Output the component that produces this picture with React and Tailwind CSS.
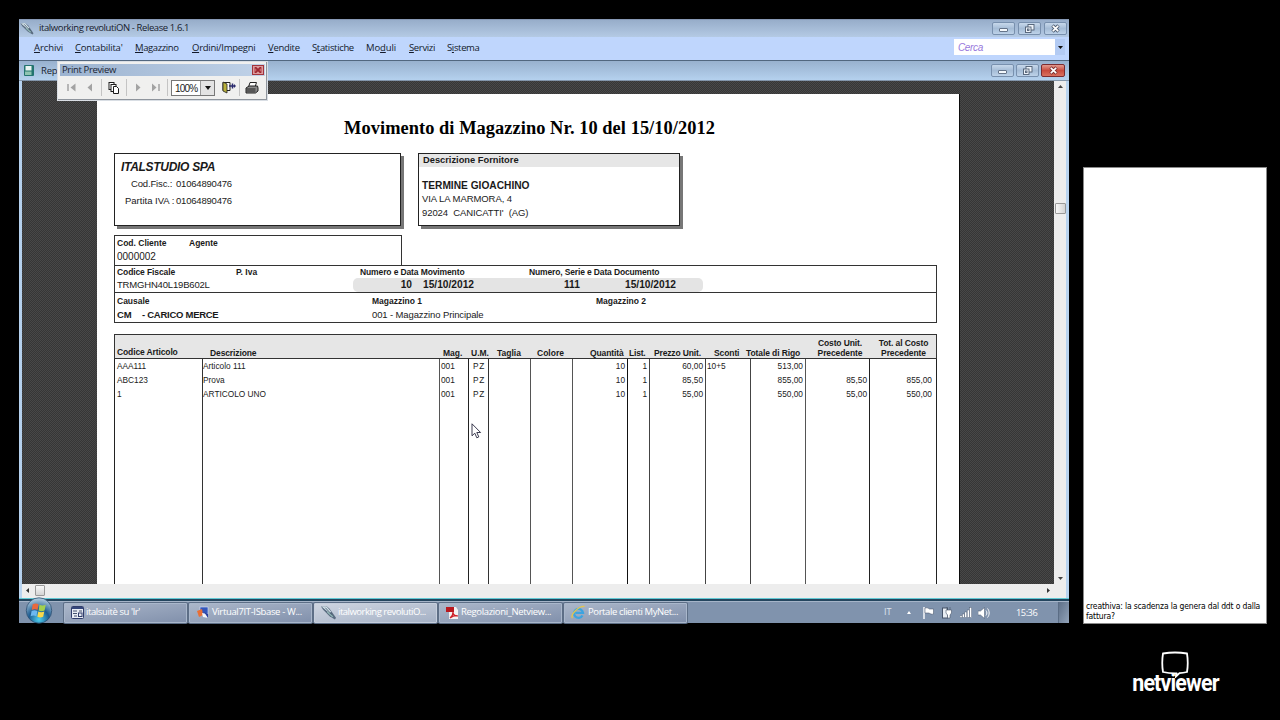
import React from 'react';

const menuItems = [
  { pre: '', key: 'A', post: 'rchivi', cell: 'w-[41px]', text: 'tracking-[-0.1px]' },
  { pre: '', key: 'C', post: "ontabilita'", cell: 'w-[60px]', text: 'tracking-[-0.2px]' },
  { pre: '', key: 'M', post: 'agazzino', cell: 'w-[57px]', text: 'tracking-[-0.4px]' },
  { pre: '', key: 'O', post: 'rdini/Impegni', cell: 'w-[76px]', text: 'tracking-[-0.27px]' },
  { pre: '', key: 'V', post: 'endite', cell: 'w-[44px]', text: 'tracking-[-0.3px]' },
  { pre: 'S', key: 't', post: 'atistiche', cell: 'w-[54px]', text: 'tracking-[-0.35px]' },
  { pre: 'Mo', key: 'd', post: 'uli', cell: 'w-[43px]', text: 'tracking-[-0.1px]' },
  { pre: '', key: 'S', post: 'ervizi', cell: 'w-[38px]', text: 'tracking-[-0.35px]' },
  { pre: 'S', key: 'i', post: 'stema', cell: 'w-[40px]', text: 'tracking-[-0.35px]' },
];

const columns = [
  { width: 'w-[88px]', cell: 'pl-[2px]', border: 'border-[#222]', rows: ['AAA111', 'ABC123', '1'] },
  { width: 'w-[237px]', cell: '', border: 'border-[#333]', rows: ['Articolo 111', 'Prova', 'ARTICOLO UNO'] },
  { width: 'w-[29px]', cell: 'pl-px', border: 'border-[#555]', rows: ['001', '001', '001'] },
  { width: 'w-[20px]', cell: 'pl-[4px] tracking-[0.6px]', border: 'border-[#222]', rows: ['PZ', 'PZ', 'PZ'] },
  { width: 'w-[42px]', cell: '', border: 'border-[#333]', rows: [] },
  { width: 'w-[42px]', cell: '', border: 'border-[#555]', rows: [] },
  { width: 'w-[55px]', cell: 'pr-[2px] text-right', border: 'border-[#555]', rows: ['10', '10', '10'] },
  { width: 'w-[22px]', cell: 'pr-[2px] text-right', border: 'border-[#111]', rows: ['1', '1', '1'] },
  { width: 'w-[56px]', cell: 'pr-[2px] text-right', border: 'border-[#444]', rows: ['60,00', '85,50', '55,00'] },
  { width: 'w-[45px]', cell: 'pl-px', border: 'border-[#444]', rows: ['10+5'] },
  { width: 'w-[55px]', cell: 'pr-[2px] text-right', border: 'border-[#444]', rows: ['513,00', '855,00', '550,00'] },
  { width: 'w-[64px]', cell: 'pr-[2px] text-right', border: 'border-[#555]', rows: ['', '85,50', '55,00'] },
  { width: 'w-[68px] border-r', cell: 'pr-[4px] text-right', border: 'border-[#222]', rows: ['', '855,00', '550,00'] },
];

const tasks = [
  { label: "italsuitè su 'lr'", icon: 'form', text: 'tracking-[-0.4px]' },
  { label: 'Virtual7IT-ISbase - W...', icon: 'virtual', text: 'tracking-[-0.35px]' },
  { label: 'italworking revolutiO...', icon: 'pen', active: true, text: 'tracking-[-0.5px]' },
  { label: 'Regolazioni_Netview...', icon: 'pdf', text: 'tracking-[-0.35px]' },
  { label: 'Portale clienti MyNet...', icon: 'ie', text: 'tracking-[-0.4px]' },
];

function PenIcon({ className }) {
  return (
    <svg className={className} viewBox="0 0 14 14">
      <path d="M0 1.500L5 1l3 2.500 6 8.500-1 1.500-5-3-6-6z" fill="#5a6c80" />
      <path d="M0.500 1.500L5 1.200l4.500 5-1.500 1.500z" fill="#d3e2ea" />
      <path d="M4 2.500l7 7.500" stroke="#3d5164" strokeWidth="0.800" />
      <path d="M6 6.500l5 4.500" stroke="#8fb5b4" strokeWidth="1.300" />
    </svg>
  );
}

function TaskIcon({ name }) {
  if (name === 'pen') return <PenIcon className="h-[15px] w-[15px]" />;
  if (name === 'form') {
    return (
      <svg className="h-[13px] w-[13px]" viewBox="0 0 13 13">
        <rect x="0.5" y="0.5" width="12" height="12" rx="1" fill="#e8edf5" stroke="#303d6b" />
        <rect x="1" y="1" width="11" height="2" fill="#35477c" />
        <path d="M2 5h4M2 7.500h4M8 5h3M3 10h3" stroke="#46536f" />
        <rect x="7.500" y="7" width="3.500" height="3.500" fill="none" stroke="#303d6b" />
      </svg>
    );
  }
  if (name === 'virtual') {
    return (
      <svg className="h-[14px] w-[14px]" viewBox="0 0 14 14">
        <rect x="4" y="1" width="8" height="7" fill="#3557ba" stroke="#dbe5fa" strokeWidth="0.600" />
        <path d="M1 5l5-2 1 6-4 2z" fill="#e96f36" />
        <path d="M6 7l4 1 2 4-5-1z" fill="#f4f5fa" />
        <path d="M8 6l4 2v4z" fill="#293e9c" />
      </svg>
    );
  }
  if (name === 'pdf') {
    return (
      <svg className="h-[14px] w-[13px]" viewBox="0 0 13 14">
        <path d="M3 1h7l2 3v9H3z" fill="#f4f1f1" />
        <rect x="0" y="1" width="8" height="5" fill="#b91920" />
        <path d="M4 12c3-2 3-5 3-6 0 3 2 4 5 4-3-1-5 0-8 2z" fill="none" stroke="#cf2028" strokeWidth="1.200" />
      </svg>
    );
  }
  return (
    <svg className="h-[15px] w-[15px]" viewBox="0 0 15 15">
      <path d="M11.500 10.500A4.500 4.500 0 1 1 12 7.800H4.500" fill="none" stroke="#3ca4e0" strokeWidth="2.300" />
      <path d="M1.500 13C-1 10 8 .5 13.500 1.500" fill="none" stroke="#e5c64c" strokeWidth="1.300" />
    </svg>
  );
}

function CaptionButton({ kind, red }) {
  return (
    <div
      className={
        red
          ? 'flex h-[13px] w-[24px] items-center justify-center rounded-[2px] border border-[#7c2c30] bg-gradient-to-b from-[#e29a90] via-[#c84a3d] to-[#d9705f]'
          : 'flex h-[13px] w-[23px] items-center justify-center rounded-[2px] border border-[#7890ae] bg-gradient-to-b from-[#c7d8eb] via-[#a5bcd6] to-[#bdd2e9]'
      }
    >
      <svg className="h-[9px] w-[11px]" viewBox="0 0 11 9">
        {kind === 'min' && <rect x="1.500" y="4.500" width="8" height="3" rx="0.500" fill="#f4f8fc" stroke="#58687e" strokeWidth="0.900" />}
        {kind === 'max' && (
          <g fill="#edf3fa" stroke="#4e5d72" strokeWidth="0.900">
            <rect x="4" y="0.500" width="6" height="5.500" />
            <rect x="1.500" y="3" width="5.500" height="5.500" />
            <rect x="3.500" y="5" width="1.500" height="1.500" />
          </g>
        )}
        {kind === 'close' && (
          <g>
            <path d="M2.500 1.500l6 6M8.500 1.500l-6 6" stroke={red ? '#7b2f30' : '#4e5d72'} strokeWidth="3.400" />
            <path d="M2.800 1.800l5.400 5.400M8.200 1.800l-5.400 5.400" stroke="#fff" strokeWidth="1.700" />
          </g>
        )}
      </svg>
    </div>
  );
}

function TitleBar() {
  return (
    <div className="flex h-[18px] items-center border-t border-[#8799b5] bg-gradient-to-b from-[#97adca] to-[#b4cae4] pr-[2px] pb-px pl-px">
      <PenIcon className="h-[13px] w-[14px]" />
      <span className="ml-[5px] flex-1 text-[9.5px] whitespace-nowrap tracking-[-0.4px] text-[#17202c]">
        italworking revolutiON - Release 1.6.1
      </span>
      <div className="flex gap-[3px]">
        <CaptionButton kind="min" />
        <CaptionButton kind="max" />
        <CaptionButton kind="close" />
      </div>
    </div>
  );
}

function MenuBar() {
  return (
    <div className="flex h-[24px] items-center border-b border-[#52677f] bg-[#bfd6fd] pr-[4px] pb-[3px] pl-[15px]">
      <div className="flex flex-1 pt-[2px] text-[9.5px] leading-[12px] whitespace-nowrap text-[#131a2b]">
        {menuItems.map((m) => (
          <div key={m.key + m.post} className={m.cell}>
            <span className={m.text}>
              {m.pre}
              <span className="underline underline-offset-1">{m.key}</span>
              {m.post}
            </span>
          </div>
        ))}
      </div>
      <div className="flex h-[16px] w-[111px] items-center bg-white pl-[4px] font-['Liberation_Sans']">
        <span className="flex-1 text-[10px] tracking-[-0.35px] text-[#9877dc] italic">Cerca</span>
        <div className="flex h-full w-[10px] items-center justify-center bg-[#b3cbf3]">
          <svg className="h-[3px] w-[5px]" viewBox="0 0 5 3">
            <path d="M0 0h5L2.500 3z" fill="#111" />
          </svg>
        </div>
      </div>
    </div>
  );
}

function MdiBar() {
  return (
    <div className="flex h-[20px] items-center border-b border-[#8295aa] bg-gradient-to-b from-[#98b1ce] to-[#b5d1ee] pr-[4px] pl-[5px]">
      <svg className="h-[11px] w-[10px]" viewBox="0 0 10 11">
        <rect width="10" height="11" rx="1" fill="#23746f" />
        <rect x="1.500" y="1" width="6" height="4.500" fill="#e9f5f0" />
        <rect x="1" y="6.500" width="6.500" height="3.500" fill="#8fc4b2" />
      </svg>
      <span className="ml-[7px] flex-1 pt-px text-[9.5px] tracking-[-0.2px] text-[#1a2431]">Rep</span>
      <div className="flex gap-[2px]">
        <CaptionButton kind="min" />
        <CaptionButton kind="max" />
        <CaptionButton kind="close" red />
      </div>
    </div>
  );
}

function PreviewToolbar() {
  return (
    <div className="absolute top-[42px] left-[38px] h-[40px] w-[211px] border border-[#d9dee4] bg-[#f0f0ef] shadow-[inset_-1px_-1px_0_#8f959d]">
      <div className="mx-[2px] mt-[2px] flex h-[12px] items-center justify-between bg-gradient-to-r from-[#9cb3d0] to-[#c0d2e8] pr-px pl-[2px]">
        <span className="text-[9.5px] leading-[12px] whitespace-nowrap tracking-[-0.35px] text-[#1b2433]">Print Preview</span>
        <div className="flex h-[10px] w-[12px] items-center justify-center border border-[#a2343c] bg-[#dc9a9c]">
          <svg className="h-[6px] w-[8px]" viewBox="0 0 8 6">
            <path d="M1 0l6 6M7 0L1 6" stroke="#9e2730" strokeWidth="1.800" />
            <path d="M1 1v4M7 1v4" stroke="#b03a42" />
          </svg>
        </div>
      </div>
      <div className="mt-px flex h-[21px] items-center">
        <svg className="ml-[9px] h-[9px] w-[10px]" viewBox="0 0 10 9">
          <path d="M1 1v7" stroke="#a3a3a3" strokeWidth="1.500" />
          <path d="M8.500 0.500v8L3.500 4.500z" fill="#a3a3a3" />
        </svg>
        <svg className="ml-[10px] h-[9px] w-[6px]" viewBox="0 0 6 9">
          <path d="M5 0.500v8L0.500 4.500z" fill="#a3a3a3" />
        </svg>
        <div className="ml-[8px] h-[17px] w-px bg-[#c4c4c4]" />
        <svg className="ml-[6px] h-[12px] w-[12px]" viewBox="0 0 12 12" fill="#fff" stroke="#1c1c1c">
          <rect x="1" y="0.500" width="5" height="7" />
          <rect x="3" y="2.500" width="5" height="7" />
          <path d="M5.500 4.500h3l2 2v5h-5z" />
        </svg>
        <div className="ml-[6px] h-[17px] w-px bg-[#c4c4c4]" />
        <svg className="ml-[8px] h-[9px] w-[6px]" viewBox="0 0 6 9">
          <path d="M1 0.500v8l4.500-4z" fill="#a3a3a3" />
        </svg>
        <svg className="ml-[10px] h-[9px] w-[10px]" viewBox="0 0 10 9">
          <path d="M8 1v7" stroke="#a3a3a3" strokeWidth="1.500" />
          <path d="M1 0.500v8l4.500-4z" fill="#a3a3a3" />
        </svg>
        <div className="ml-[6px] h-[17px] w-px bg-[#c4c4c4]" />
        <div className="ml-[3px] flex h-[16px] w-[44px] items-center border border-[#777] bg-white pl-[3px]">
          <span className="flex-1 pt-px font-['Liberation_Sans'] text-[10px] tracking-[-0.8px] text-[#1c1c1c]">100%</span>
          <div className="flex h-full w-[14px] items-center justify-center border-l border-[#999] bg-[#e3e3e3]">
            <svg className="h-[4px] w-[6px]" viewBox="0 0 6 4">
              <path d="M0 0h6L3 4z" fill="#111" />
            </svg>
          </div>
        </div>
        <svg className="ml-[7px] h-[13px] w-[14px]" viewBox="0 0 14 13">
          <path d="M1 1.500h7v8H1z" fill="#fff" stroke="#222" />
          <path d="M1 1l4 2v9L1 10z" fill="#b9b13c" stroke="#222" strokeWidth="0.800" />
          <path d="M7 5h6M10.500 2.500v5" stroke="#28286c" strokeWidth="1.500" />
          <path d="M12 3l2 2-2 2z" fill="#28286c" />
        </svg>
        <div className="ml-[3px] h-[17px] w-px bg-[#c4c4c4]" />
        <svg className="ml-[5px] h-[12px] w-[14px]" viewBox="0 0 14 12">
          <path d="M5 0.500h6.500L10 5H3.500z" fill="#fff" stroke="#222" />
          <path d="M1 6l3-2h8.500l.5 2v3l-2.500 2H1z" fill="#8b8b8b" stroke="#222" />
          <path d="M1.500 7h9M1.500 9h9" stroke="#222" />
        </svg>
      </div>
    </div>
  );
}

function ReportHeader() {
  return (
    <div className="flex gap-[17px]">
      <div className="h-[73px] w-[287px] border border-[#222] bg-white pt-[7px] shadow-[3px_3px_0_#777]">
        <div className="pl-[6px] text-[12px] leading-[13px] font-bold tracking-[-0.3px] whitespace-nowrap italic">ITALSTUDIO SPA</div>
        <div className="mt-[3px] flex h-[14px] items-center pl-[16px] text-[9.5px] whitespace-nowrap">
          <span className="w-[45px] tracking-[-0.15px]">Cod.Fisc.:</span>
          <span className="tracking-[-0.2px]">01064890476</span>
        </div>
        <div className="mt-[3px] flex h-[14px] items-center pl-[10px] text-[9.5px] whitespace-nowrap">
          <span className="w-[51px]">Partita IVA :</span>
          <span className="tracking-[-0.2px]">01064890476</span>
        </div>
      </div>
      <div className="h-[73px] w-[262px] border border-[#222] bg-white shadow-[3px_3px_0_#777]">
        <div className="flex h-[13px] items-center bg-[#e6e6e6] pt-px pl-[4px] text-[9.3px] font-bold">Descrizione Fornitore</div>
        <div className="mt-[12px] pl-[3px] text-[10.2px] leading-[13px] font-bold">TERMINE GIOACHINO</div>
        <div className="pl-[3px] text-[9.5px] leading-[14px] tracking-[-0.08px]">VIA LA MARMORA, 4</div>
        <div className="pl-[3px] text-[9.5px] leading-[13px] tracking-[-0.08px] whitespace-pre">92024  CANICATTI'  (AG)</div>
      </div>
    </div>
  );
}

function MovementInfo() {
  return (
    <div className="mt-[9px] w-[823px] whitespace-nowrap">
      <div className="h-[30px] w-[288px] border border-b-0 border-[#333] pt-px pl-[2px]">
        <div className="flex text-[8.5px] leading-[12px] font-bold">
          <span className="w-[72px]">Cod. Cliente</span>
          <span>Agente</span>
        </div>
        <div className="mt-px text-[10px] leading-[13px]">0000002</div>
      </div>
      <div className="h-[27px] border border-b-0 border-[#333] pl-[2px]">
        <div className="flex text-[8.5px] leading-[12px] font-bold">
          <span className="w-[119px] tracking-[-0.1px]">Codice Fiscale</span>
          <span className="w-[124px]">P. Iva</span>
          <span className="w-[169px] tracking-[-0.12px]">Numero e Data Movimento</span>
          <span className="tracking-[-0.14px]">Numero, Serie e Data Documento</span>
        </div>
        <div className="flex h-[14px] items-center text-[9.5px]">
          <span className="w-[236px] tracking-[-0.18px]">TRMGHN40L19B602L</span>
          <div className="flex h-[14px] w-[350px] items-center rounded-[5px] bg-[#e4e4e4] text-[10.2px] font-bold">
            <span className="w-[59px] text-right">10</span>
            <span className="ml-[11px] w-[141px]">15/10/2012</span>
            <span className="w-[61px]">111</span>
            <span>15/10/2012</span>
          </div>
        </div>
      </div>
      <div className="h-[31px] border border-[#333] pt-[2px] pl-[2px]">
        <div className="flex text-[8.5px] leading-[12px] font-bold">
          <span className="w-[255px]">Causale</span>
          <span className="w-[224px]">Magazzino 1</span>
          <span>Magazzino 2</span>
        </div>
        <div className="mt-px flex h-[14px] items-center text-[9.5px]">
          <span className="w-[25px] font-bold tracking-[-0.2px]">CM</span>
          <span className="w-[230px] font-bold tracking-[-0.27px]">- CARICO MERCE</span>
          <span className="tracking-[-0.12px]">001 - Magazzino Principale</span>
        </div>
      </div>
    </div>
  );
}

function ItemsTable() {
  return (
    <div className="mt-[11px] flex w-[823px] flex-1 flex-col whitespace-nowrap">
      <div className="flex h-[25px] items-end border border-[#333] bg-[#e6e6e6] pl-[2px] text-[8.5px] leading-[10px] font-bold">
        <span className="w-[93px] pb-px tracking-[-0.12px]">Codice Articolo</span>
        <span className="w-[233px] tracking-[-0.12px]">Descrizione</span>
        <span className="w-[28px]">Mag.</span>
        <span className="w-[26px]">U.M.</span>
        <span className="w-[40px]">Taglia</span>
        <span className="w-[53px]">Colore</span>
        <span className="w-[39px] tracking-[-0.1px]">Quantità</span>
        <span className="w-[25px] tracking-[-0.2px]">List.</span>
        <span className="w-[60px] tracking-[-0.15px]">Prezzo Unit.</span>
        <span className="w-[32px] tracking-[-0.1px]">Sconti</span>
        <span className="w-[71px] tracking-[-0.1px]">Totale di Rigo</span>
        <span className="w-[46px] text-center tracking-[-0.1px]">Costo Unit.<br />Precedente</span>
        <span className="ml-[15px] w-[51px] text-center tracking-[-0.1px]">Tot. al Costo<br />Precedente</span>
      </div>
      <div className="flex flex-1 text-[8.3px] leading-[14px]">
        {columns.map((col, i) => (
          <div key={i} className={`shrink-0 border-l ${col.border} ${col.width} ${col.cell}`}>
            {col.rows.map((value, r) => (
              <div key={r} className="h-[14px]">{value}</div>
            ))}
          </div>
        ))}
      </div>
    </div>
  );
}

function Workspace() {
  return (
    <div className="flex h-[503px] border-l-[3px] border-[#b5d1ee]">
      <div className="flex flex-1 overflow-hidden bg-[#3a3a3a] bg-[conic-gradient(#484848_25%,#363636_0_50%,#484848_0_75%,#363636_0)] bg-[size:2px_2px] pt-[13px] pl-[75px]">
        <div className="flex w-[862px] flex-col bg-white pl-[17px] font-['Liberation_Sans'] text-[#1a1a1a] shadow-[1px_0_0_#0c0c0c]">
          <h1 className="mt-[23px] mb-[14px] pr-[14px] text-center font-['Liberation_Serif'] text-[18.4px] leading-[22px] font-bold tracking-[0.05px] whitespace-nowrap text-black">
            Movimento di Magazzino Nr. 10 del 15/10/2012
          </h1>
          <ReportHeader />
          <MovementInfo />
          <ItemsTable />
        </div>
      </div>
      <div className="flex w-[12px] flex-col items-center justify-between bg-[#ededed] py-[4px]">
        <svg className="h-[3px] w-[5px]" viewBox="0 0 5 3"><path d="M0 3h5L2.500 0z" fill="#444" /></svg>
        <div className="mt-[115px] mb-auto h-[11px] w-[11px] rounded-[1px] border border-[#999] bg-gradient-to-r from-[#f8f8f8] to-[#d4d4d4]" />
        <svg className="h-[3px] w-[5px]" viewBox="0 0 5 3"><path d="M0 0h5L2.500 3z" fill="#444" /></svg>
      </div>
      <div className="w-[3px] bg-[#b9d4f0]" />
    </div>
  );
}

function HorizontalScroll() {
  return (
    <div className="flex h-[14px] items-center border-x-[3px] border-[#b9d4f0] bg-[#ededed] pr-[16px] pb-px pl-[4px]">
      <svg className="h-[5px] w-[3px]" viewBox="0 0 3 5"><path d="M3 0v5L0 2.500z" fill="#333" /></svg>
      <div className="ml-[6px] h-[11px] w-[10px] rounded-[1px] border border-[#999] bg-gradient-to-b from-[#f8f8f8] to-[#d4d4d4]" />
      <svg className="ml-auto h-[5px] w-[3px]" viewBox="0 0 3 5"><path d="M0 0v5l3-2.500z" fill="#333" /></svg>
    </div>
  );
}

function Taskbar() {
  return (
    <div className="flex h-[22px] items-center border-t border-[#a5b4c8] bg-[#8093ad]">
      <svg className="relative -top-[2px] ml-[6px] h-[27px] w-[28px] shrink-0" viewBox="0 0 28 28">
        <defs>
          <radialGradient id="orb" cx="50%" cy="85%" r="80%">
            <stop offset="0" stopColor="#4fd0ee" />
            <stop offset="0.5" stopColor="#1d5c91" />
            <stop offset="1" stopColor="#a9c6da" />
          </radialGradient>
        </defs>
        <circle cx="14" cy="14" r="13.200" fill="url(#orb)" stroke="#2b4c6d" strokeWidth="0.800" />
        <path d="M7.500 7.500c2-1 4-1 6 0l-1 6c-2-1-4-1-6 0z" fill="#e9683c" />
        <path d="M14.500 8c2 1 4.500 1 6.500 0l-1.200 6c-2 1-4.200 1-6.200 0z" fill="#a3d04f" />
        <path d="M6.300 14.500c2-1 4-1 6 0l-1 5.500c-2-1-4-1-6 0z" fill="#6db8f0" />
        <path d="M13.300 15c2 1 4.200 1 6.200 0l-1.200 5.500c-2 1-4 1-6 0z" fill="#f8d84b" />
      </svg>
      <div className="ml-[11px] flex gap-[2px]">
        {tasks.map((task) => (
          <div
            key={task.label}
            className={
              task.active
                ? 'flex h-[20px] w-[123px] items-center rounded-[1px] border border-[#c5cedc] bg-gradient-to-br from-[#ced5e1] to-[#a5b1c5] pl-[6px] shadow-[0_0_0_1px_#5d6e86]'
                : 'flex h-[20px] w-[123px] items-center rounded-[1px] border border-[#a9b7cb] bg-gradient-to-br from-[#abb7ca] to-[#8291ac] pl-[6px] shadow-[0_0_0_1px_#5d6e86]'
            }
          >
            <TaskIcon name={task.icon} />
            <span className={`ml-[2px] text-[9.5px] whitespace-nowrap text-white ${task.text}`}>{task.label}</span>
          </div>
        ))}
      </div>
      <div className="ml-auto flex h-full items-center text-white">
        <span className="w-[23px] pb-[2px] text-[9px] text-[#dfe6ef]">IT</span>
        <svg className="mr-[12px] h-[3px] w-[4px]" viewBox="0 0 4 3"><path d="M0 3h4L2 0z" fill="#fff" /></svg>
        <svg className="mr-[8px] h-[12px] w-[11px]" viewBox="0 0 11 12">
          <path d="M1 0v12" stroke="#fff" strokeWidth="1.400" />
          <path d="M2 1c2-.5 3 0 4.500 1h4v5c-2 .5-3 0-4.500-1H2z" fill="#fff" stroke="#3d4b60" strokeWidth="0.500" />
        </svg>
        <svg className="mr-[8px] h-[13px] w-[10px]" viewBox="0 0 10 13">
          <rect x="0.500" y="2" width="5" height="10" fill="#e9eef4" stroke="#46546a" />
          <path d="M5 1v3M8 1v3M4 4h5.500v3L8 9v3H5.500V9L4 7z" fill="#fff" stroke="#46546a" strokeWidth="0.600" />
        </svg>
        <svg className="mr-[6px] h-[11px] w-[12px]" viewBox="0 0 12 11" fill="#fff" stroke="#46546a" strokeWidth="0.400">
          <rect x="0" y="8.500" width="2" height="2" />
          <rect x="2.400" y="7" width="2" height="3.500" />
          <rect x="4.800" y="5" width="2" height="5.500" />
          <rect x="7.200" y="3" width="2" height="7.500" />
          <rect x="9.600" y="0.500" width="2" height="10" />
        </svg>
        <svg className="h-[12px] w-[12px]" viewBox="0 0 12 12">
          <path d="M0 4h2.500L6.500 0.500v11L2.500 8H0z" fill="#fff" stroke="#46546a" strokeWidth="0.500" />
          <path d="M8 3.500c1.200 1.500 1.200 3.500 0 5M9.500 1.500c2.200 2.500 2.200 6.500 0 9" fill="none" stroke="#fff" />
        </svg>
        <span className="ml-[26px] w-[42px] text-[9.3px] tracking-[-0.5px]">15:36</span>
        <div className="h-full w-[11px] border-l border-[#5b6d85] bg-gradient-to-br from-[#5f7189] to-[#93a4ba]" />
      </div>
    </div>
  );
}

export default function App() {
  return (
    <div className="flex h-[720px] w-[1280px] overflow-hidden bg-black font-['Open_Sans',sans-serif]">
      <div className="relative mt-[19px] ml-[19px] flex h-[604px] w-[1050px] flex-col">
        <TitleBar />
        <MenuBar />
        <MdiBar />
        <Workspace />
        <HorizontalScroll />
        <div className="h-[3px] border-t border-[#62c9d4] bg-[#24455e]" />
        <Taskbar />
        <PreviewToolbar />
        {/* mouse pointer */}
        <svg className="absolute top-[404px] left-[452px] h-[16px] w-[11px]" viewBox="0 0 11 16">
          <path d="M1 0.800v12l2.800-2.600 2 4.600 2-.9-2-4.400h3.800z" fill="#fff" stroke="#26263c" strokeWidth="0.900" />
        </svg>
      </div>

      <div className="ml-[14px] flex w-[184px] flex-col items-center">
        <div className="mt-[167px] flex h-[457px] w-full flex-col justify-end border border-[#8a8a8a] bg-white pr-[2px] pb-[2px] pl-[2px] font-['DejaVu_Sans_Condensed','DejaVu_Sans',sans-serif] text-[8.5px] leading-[10px] tracking-[-0.16px] text-black">
          <p className="whitespace-nowrap">
            creathiva: la scadenza la genera dal ddt o dalla
            <br />
            fattura?
          </p>
        </div>
        <svg className="mt-[27px] h-[27px] w-[30px]" viewBox="0 0 30 27">
          <path d="M3 2.500Q15 0.500 27 2.500Q28.500 12 27 21Q23 22 19.500 22.200L16 25.500L16.300 22.400Q9 22.500 3 21Q1.500 12 3 2.500z" fill="none" stroke="#fff" strokeWidth="1.800" />
          <path d="M15 25.500l1-3h4z" fill="#fff" />
        </svg>
        <div className="-mt-[6px] origin-center scale-x-[0.93] font-['Roboto'] text-[23px] leading-[24px] font-bold tracking-[-0.9px] text-white">
          netviewer
        </div>
      </div>
    </div>
  );
}
